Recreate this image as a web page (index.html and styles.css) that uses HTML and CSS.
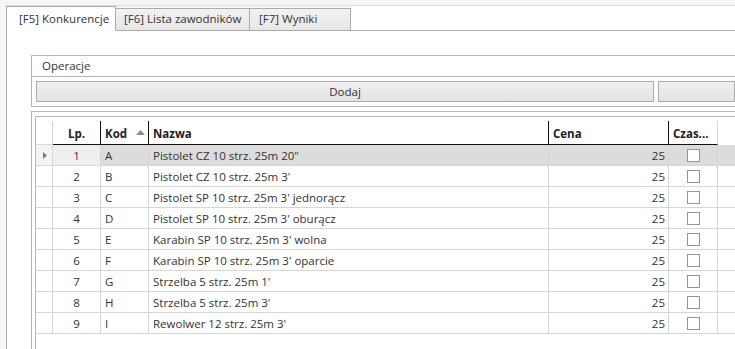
FILE: index.html
```html
<!DOCTYPE html>
<html lang="pl">
<head>
    <meta charset="UTF-8">
    <title>Konkurencje</title>
    <link rel="stylesheet" href="styles.css">
</head>
<body>
    <div class="window">
        <div class="tabs">
            <div class="tab tab-active">[F5] Konkurencje</div>
            <div class="tab tab-2">[F6] Lista zawodników</div>
            <div class="tab tab-3">[F7] Wyniki</div>
            <div class="tab-fill"></div>
        </div>

        <div class="panel">
            <div class="group">
                <div class="group-title">Operacje</div>
                <div class="group-buttons">
                    <button class="btn btn-main">Dodaj</button>
                    <button class="btn btn-rest"></button>
                </div>
            </div>

            <div class="grid-box">
                <div class="grid">
                    <div class="row head">
                        <div class="c rh"></div>
                        <div class="c lp">Lp.</div>
                        <div class="c kod">Kod
                            <svg class="sort" width="9" height="5" viewBox="0 0 9 5"><polygon points="0,5 4.5,0 9,5" fill="#8a8a8a"/></svg>
                        </div>
                        <div class="c nazwa">Nazwa</div>
                        <div class="c cena">Cena</div>
                        <div class="c czas">Czas...</div>
                        <div class="c fill"></div>
                    </div>

                    <div class="row selected">
                        <div class="c rh"><svg width="4" height="7" viewBox="0 0 4 7"><polygon points="0,0 4,3.5 0,7" fill="#7a7a7a"/></svg></div>
                        <div class="c lp">1</div>
                        <div class="c kod">A</div>
                        <div class="c nazwa">Pistolet CZ 10 strz. 25m 20"</div>
                        <div class="c cena">25</div>
                        <div class="c czas"><span class="check"></span></div>
                        <div class="c fill"></div>
                    </div>
                    <div class="row">
                        <div class="c rh"></div>
                        <div class="c lp">2</div>
                        <div class="c kod">B</div>
                        <div class="c nazwa">Pistolet CZ 10 strz. 25m 3'</div>
                        <div class="c cena">25</div>
                        <div class="c czas"><span class="check"></span></div>
                        <div class="c fill"></div>
                    </div>
                    <div class="row">
                        <div class="c rh"></div>
                        <div class="c lp">3</div>
                        <div class="c kod">C</div>
                        <div class="c nazwa">Pistolet SP 10 strz. 25m 3' jednorącz</div>
                        <div class="c cena">25</div>
                        <div class="c czas"><span class="check"></span></div>
                        <div class="c fill"></div>
                    </div>
                    <div class="row">
                        <div class="c rh"></div>
                        <div class="c lp">4</div>
                        <div class="c kod">D</div>
                        <div class="c nazwa">Pistolet SP 10 strz. 25m 3' oburącz</div>
                        <div class="c cena">25</div>
                        <div class="c czas"><span class="check"></span></div>
                        <div class="c fill"></div>
                    </div>
                    <div class="row">
                        <div class="c rh"></div>
                        <div class="c lp">5</div>
                        <div class="c kod">E</div>
                        <div class="c nazwa">Karabin SP 10 strz. 25m 3' wolna</div>
                        <div class="c cena">25</div>
                        <div class="c czas"><span class="check"></span></div>
                        <div class="c fill"></div>
                    </div>
                    <div class="row">
                        <div class="c rh"></div>
                        <div class="c lp">6</div>
                        <div class="c kod">F</div>
                        <div class="c nazwa">Karabin SP 10 strz. 25m 3' oparcie</div>
                        <div class="c cena">25</div>
                        <div class="c czas"><span class="check"></span></div>
                        <div class="c fill"></div>
                    </div>
                    <div class="row">
                        <div class="c rh"></div>
                        <div class="c lp">7</div>
                        <div class="c kod">G</div>
                        <div class="c nazwa">Strzelba 5 strz. 25m 1'</div>
                        <div class="c cena">25</div>
                        <div class="c czas"><span class="check"></span></div>
                        <div class="c fill"></div>
                    </div>
                    <div class="row">
                        <div class="c rh"></div>
                        <div class="c lp">8</div>
                        <div class="c kod">H</div>
                        <div class="c nazwa">Strzelba 5 strz. 25m 3'</div>
                        <div class="c cena">25</div>
                        <div class="c czas"><span class="check"></span></div>
                        <div class="c fill"></div>
                    </div>
                    <div class="row">
                        <div class="c rh"></div>
                        <div class="c lp">9</div>
                        <div class="c kod">I</div>
                        <div class="c nazwa">Rewolwer 12 strz. 25m 3'</div>
                        <div class="c cena">25</div>
                        <div class="c czas"><span class="check"></span></div>
                        <div class="c fill"></div>
                    </div>
                </div>
            </div>
        </div>
    </div>
</body>
</html>
```

FILE: styles.css
```css
* {
    box-sizing: border-box;
}
html, body {
    height: 100%;
}
body {
    margin: 0;
    background: #f6f6f6;
    font-family: "Open Sans", "Noto Sans", sans-serif;
    font-size: 11.5px;
    color: #333;
    overflow: hidden;
}
.window {
    margin: 5px 0 0 6px;
    border-top: 1px solid #dcdcdc;
    height: calc(100% - 5px);
    display: flex;
    flex-direction: column;
}

/* tabs */
.tabs {
    display: flex;
    align-items: flex-end;
    height: 25px;
    flex-shrink: 0;
}
.tab {
    height: 23px;
    line-height: 20px;
    padding-left: 8px;
    background: linear-gradient(#f2f2f2, #e6e6e6);
    border-top: 1px solid #acacac;
    border-right: 1px solid #acacac;
    border-bottom: 1px solid #acacac;
    white-space: nowrap;
}
.tab-active {
    width: 110px;
    height: 25px;
    line-height: 23px;
    padding-left: 12px;
    background: #fff;
    border-left: 1px solid #acacac;
    border-bottom: 1px solid #fff;
}
.tab-2 {
    width: 134px;
}
.tab-3 {
    width: 101px;
    padding-left: 9px;
}
.tab-fill {
    flex: 1;
    height: 25px;
    background: #fff;
    border-bottom: 1px solid #acacac;
}

/* panel */
.panel {
    flex: 1;
    display: flex;
    flex-direction: column;
    background: #fff;
    border-left: 1px solid #acacac;
    padding: 24px 0 0 24px;
}
.group {
    border: 1px solid #b7b7b7;
    border-right: none;
}
.group-title {
    height: 21px;
    line-height: 19px;
    padding-left: 10px;
    border-bottom: 1px solid #b7b7b7;
}
.group-buttons {
    display: flex;
    gap: 4px;
    padding: 4px;
    padding-right: 0;
}
.btn {
    height: 21px;
    border: 1px solid #adadad;
    background: linear-gradient(#f0f0f0, #e3e3e3);
    font: inherit;
    color: #333;
    padding: 0;
}
.btn-main {
    width: 618px;
}
.btn-rest {
    flex: 1;
}

/* grid */
.grid-box {
    flex: 1;
    display: flex;
    margin-top: 4px;
    border-top: 1px solid #b7b7b7;
    border-left: 1px solid #b7b7b7;
    padding: 4px 0 0 3px;
}
.grid {
    flex: 1;
    border-top: 1px solid #b7b7b7;
    border-left: 1px solid #b7b7b7;
    padding-top: 4px;
}
.row {
    display: flex;
    height: 21px;
    border-bottom: 1px solid #d6d6d6;
}
.c {
    height: 100%;
    border-right: 1px solid #d6d6d6;
    display: flex;
    align-items: center;
    white-space: nowrap;
    overflow: hidden;
}
.rh {
    width: 17px;
    padding-left: 7px;
}
.lp {
    width: 48px;
    justify-content: center;
}
.kod {
    width: 48px;
    padding: 0 3px 0 4px;
    justify-content: space-between;
}
.nazwa {
    width: 400px;
    padding-left: 4px;
}
.cena {
    width: 120px;
    justify-content: flex-end;
    padding-right: 3px;
}
.czas {
    width: 49px;
    justify-content: center;
}
.fill {
    flex: 1;
    border-right: none;
}

.head {
    height: 24px;
    border-bottom: none;
    font-weight: bold;
    color: #222;
}
.head .c {
    padding-top: 1px;
    border-bottom: 1px solid #111;
}
.head .lp,
.head .kod,
.head .nazwa,
.head .cena {
    border-right-color: #111;
}
.head .cena {
    justify-content: flex-start;
    padding-left: 4px;
}
.head .czas {
    justify-content: flex-start;
    padding-left: 4px;
}
.head .rh {
    border-bottom-color: #d6d6d6;
}
.head .fill {
    border-bottom: none;
}
.sort {
    margin-top: -2px;
}

.selected .c {
    background: #dcdcdc;
}
.selected .rh {
    background: #f4f4f4;
}
.selected .lp {
    background: #efefef;
}

.check {
    width: 13px;
    height: 13px;
    border: 1px solid #959595;
    background: #fff;
}
```
